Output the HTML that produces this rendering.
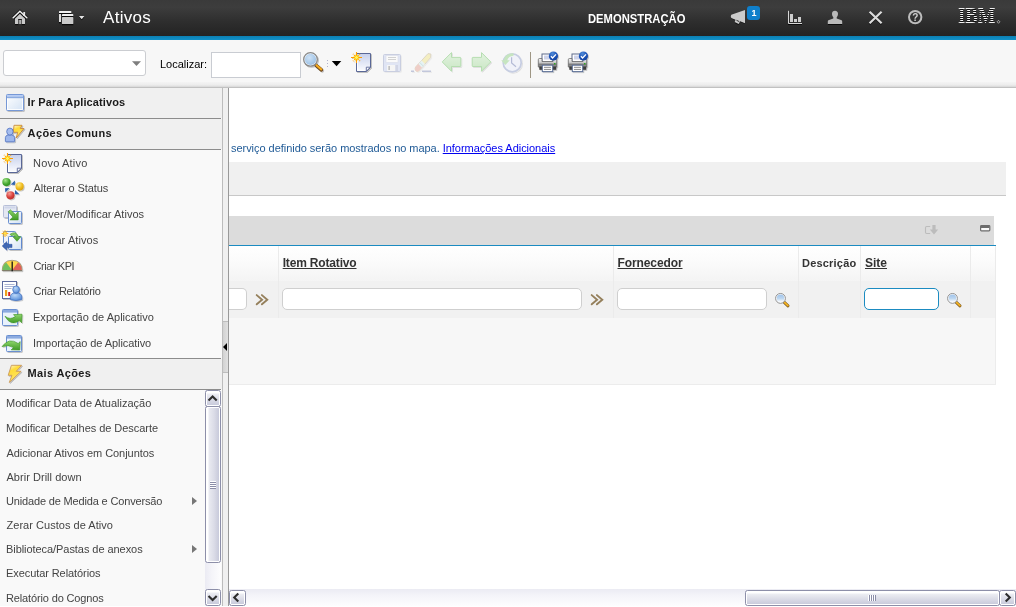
<!DOCTYPE html>
<html lang="pt-BR">
<head>
<meta charset="utf-8">
<title>Ativos</title>
<style>
*{box-sizing:border-box;margin:0;padding:0}
body{will-change:transform}
html,body{width:1016px;height:607px;overflow:hidden;background:#fff;font-family:"Liberation Sans",Arial,sans-serif;font-size:11px;color:#444}
.abs,.abs-c>*{position:absolute}
svg{position:absolute;overflow:visible}
#hdr{left:0;top:0;width:1016px;height:36px;background:linear-gradient(#3a3a3a 0,#3d3d3d 20%,#2e2e2e 60%,#232323 100%)}
#hdrline{left:0;top:36px;width:1016px;height:4px;background:linear-gradient(#0c7fb3,#1191c9)}
#tb{left:0;top:40px;width:1016px;height:48px;background:#f7f7f7}
#tbline{left:0;top:82px;width:1016px;height:6px;background:linear-gradient(#f4f4f4,#ececec 50%,#dcdcdc 75%,#b4b4b4)}
#title{left:103px;top:8px;font-size:17px;color:#fff;line-height:20px;letter-spacing:.3px;white-space:nowrap}
#demo{left:588px;top:12px;transform-origin:0 0;transform:scaleX(.937);font-size:12px;font-weight:bold;color:#fff;line-height:14px;white-space:nowrap}
#badge{left:747px;top:6px;width:13px;height:14px;background:#0f7fcb;border-radius:3px;color:#fff;font-size:9px;font-weight:bold;line-height:14px;text-align:center;padding-left:1px}
#combo{left:3px;top:50px;width:143px;height:26px;background:#fff;border:1px solid #cbcdd1;border-radius:3px}
#loc{left:160px;top:57px;font-size:11px;color:#000;line-height:14px;white-space:nowrap}
#find{left:211px;top:52px;width:90px;height:26px;background:#fff;border:1px solid #c9ccd2}
#tbsep{left:530px;top:52px;width:1px;height:26px;background:#9e9684}
#nav{left:0;top:88px;width:222px;height:519px;background:#f9f9f9}
.nh{left:0;width:222px;height:30px;background:#f0f0f0;font-weight:bold;color:#1a1a1a;font-size:11px;line-height:14px;padding:7px 0 0 27.6px;white-space:nowrap}
.nl{left:0;width:221px;height:1px;background:#8c8c8c}
.ni{left:33px;line-height:14px;height:14px;color:#444;white-space:nowrap}
.mi{left:6px;line-height:14px;height:14px;color:#444;white-space:nowrap}
.sub{width:0;height:0;border-left:5px solid #777;border-top:4px solid transparent;border-bottom:4px solid transparent;left:192px}
#split{left:222px;top:88px;width:7px;height:519px;background:#f0f0f0;border-left:1px solid #bcbcbc;border-right:1px solid #999}
#grip{left:223px;top:321px;width:5px;height:52px;background:linear-gradient(90deg,#d2d2d2,#e1e1e1);border-top:1px solid #bdbdbd;border-bottom:1px solid #bdbdbd}
#griparrow{left:223px;top:343px;width:0;height:0;border-right:4px solid #000;border-top:4px solid transparent;border-bottom:4px solid transparent}
#main{left:229px;top:88px;width:787px;height:519px;background:#fff}
#msg{left:231px;top:141px;font-size:11px;line-height:14px;color:#1f5a96;white-space:nowrap;letter-spacing:-.04px}
#msg a{color:#0000f0;text-decoration:underline;letter-spacing:-.03px}
#band{left:229px;top:162px;width:777px;height:34px;background:#f0f0f0;border-bottom:1px solid #c8c8c8}
#ttb{left:229px;top:216px;width:765px;height:29px;background:#dcdcdc}
#tline{left:229px;top:245px;width:767px;height:1px;background:#1b8bc1}
#thead{left:229px;top:246px;width:767px;height:35px;background:linear-gradient(#fff,#fbfbfb 45%,#f4f4f4)}
#tfilt{left:229px;top:281px;width:767px;height:37px;background:#f1f1f1}
#tempty{left:229px;top:318px;width:767px;height:67px;background:#f7f7f7;border-bottom:1px solid #ececec;border-right:1px solid #ececec}
.cs{top:246px;width:1px;height:72px;background:#ebebeb}
.th{top:256px;font-size:12px;font-weight:bold;color:#333;line-height:14px;white-space:nowrap;text-decoration:underline}
.fi{top:288px;height:22px;background:#fff;border:1px solid #cfcfcf;border-radius:5px}
.sb{background:linear-gradient(#fff,#e9eaf2 40%,#c6c8da);border:1px solid #9496b0;border-radius:3px;box-shadow:inset 0 0 0 1px #fff}

.sbv{background:linear-gradient(90deg,#fff 0,#fff 2px,#e9eaf1 3px,#dcdde8 55%,#c4c6d8 100%)}
.sbh{background:linear-gradient(#fff 0,#fff 2px,#ecedf3 3px,#dedfe9 50%,#c6c8da 100%)}
.sbb{border:1px solid #8d8fa9;border-radius:2.5px;box-shadow:inset 0 0 0 1px #fff}
#vtrack{left:205px;top:390px;width:16px;height:216px;background:linear-gradient(90deg,#ebebf3,#f4f4f9 40%,#fdfdfe)}
#htrack{left:229px;top:589px;width:787px;height:17px;background:linear-gradient(#ebebf3,#f4f4f9 40%,#fdfdfe)}

#ibm{left:958px;top:3px;width:60px;height:24px;font-family:"Liberation Serif","DejaVu Serif",serif;font-weight:bold;font-size:24px;line-height:24px;color:transparent;white-space:nowrap;transform-origin:0 0;transform:scale(.78,1);background:repeating-linear-gradient(#0a0a0a 0,#0a0a0a 1px,#f2f2f2 1px,#f2f2f2 2px);-webkit-background-clip:text;background-clip:text}
</style>
</head>
<body>
<div class="abs" id="hdr"></div>
<div class="abs" id="hdrline"></div>
<div class="abs" id="title">Ativos</div>
<div class="abs" id="demo">DEMONSTRAÇÃO</div>

<svg id="hicons" width="1016" height="36" viewBox="0 0 1016 36" style="left:0;top:0">
<!-- home -->
<g>
<path d="M15 24.6h3.3M21.7 24.6H25M13.4 18.7l1.2 0M25.6 18.7h1.2" stroke="#0a0a0a" stroke-width="1" fill="none"/>
<path d="M15 24V17.6L19.9 12.9 25 17.6V24h-3.3v-5h-3.4v5z" fill="#c9c9c9"/>
<rect x="19.3" y="20" width="1.5" height="4" fill="#d2d2d2"/>
<path d="M18.3 19h3.4v1h-3.4z" fill="#1c1c1c"/>
<path d="M13.3 18 19.9 11.5 26.7 18" stroke="#111" stroke-width="3.2" fill="none"/>
<path d="M23.3 12h1.8v4h-1.8z" fill="#e4e4e4"/>
<path d="M13.2 17.7 19.9 11.2 26.8 17.7" stroke="#f2f2f2" stroke-width="1.5" fill="none" stroke-linecap="round"/>
</g>
<!-- apps -->
<g>
<path d="M59 13.6h12.3M59 22.6h2M62 24.6h11.3M62 16.6h11.3" stroke="#0a0a0a" stroke-width="1.2" fill="none"/>
<path d="M59 13v-1.4q0-.7.7-.7h10.9q.7 0 .7.7V13z" fill="#efefef"/>
<rect x="59" y="14" width="2" height="8" fill="#dedede"/>
<path d="M62 16v-1.3q0-.7.7-.7h9.9q.7 0 .7.7V16z" fill="#efefef"/>
<rect x="62" y="17.1" width="11.3" height="6.9" rx=".6" fill="#cacaca"/>
<path d="M79 17h5.4l-2.7 3.2z" fill="#0a0a0a"/>
<path d="M79 16h5.4l-2.7 3.3z" fill="#e4e4e4"/>
</g>
<!-- megaphone -->
<g>
<path d="M731 16.6 745 10.6v13.4l-4.6-2-1.8 3-3.6-1.8 1-2.6-4.4-1.8q-1-1.3 0-2.6z" fill="#0c0c0c" opacity=".8"/>
<path d="M731.3 14.8 745 10v13.3l-4.8-2-1.5 2.6-4-2 .8-2.2-4.2-1.7q-1.1-1.6 0-3.2z" fill="#cbcbcb"/>
<path d="M736.5 20.3l2.8 1.3" stroke="#333" stroke-width="1" fill="none"/>
</g>
<!-- chart -->
<g>
<path d="M788 24.5h14" stroke="#0a0a0a" stroke-width="1"/>
<path d="M788.5 10.8V23.5H802" stroke="#d6d6d6" stroke-width="1" fill="none"/>
<rect x="790" y="14" width="3" height="8" fill="#cdcdcd"/>
<rect x="794" y="19" width="3" height="3" fill="#cdcdcd"/>
<rect x="798" y="17" width="3" height="5" fill="#cdcdcd"/>
</g>
<!-- user -->
<g>
<path d="M828 24.5h14" stroke="#0a0a0a" stroke-width="1"/>
<path d="M835 10.7c1.9 0 3 1.3 3 3.1 0 1.5-.5 2.8-1.3 3.5v1.2l4.3 1.5c.8.3 1.2.8 1.2 1.7V24H827.8v-2.3c0-.9.4-1.4 1.2-1.7l4.3-1.5v-1.2c-.8-.7-1.3-2-1.3-3.5 0-1.8 1.1-3.1 3-3.1z" fill="#b9b9b9"/>
</g>
<!-- close -->
<g>
<path d="M869.6 12.6 881.6 24.4M881.6 12.6 869.6 24.4" stroke="#0a0a0a" stroke-width="2" fill="none" opacity=".7"/>
<path d="M869.6 11.7 881.6 23.3M881.6 11.7 869.6 23.3" stroke="#dcdcdc" stroke-width="2.2" fill="none"/>
</g>
<path d="M998.5 20.3l1.4 1.5-1.4 1.5-1.4-1.5z" fill="none" stroke="#cfcfcf" stroke-width=".7"/>
<!-- help -->
<g>
<circle cx="915.2" cy="17.1" r="6.2" stroke="#bdbdbd" stroke-width="2" fill="none"/>
<text x="915.2" y="20.5" text-anchor="middle" font-family="Liberation Sans,Arial,sans-serif" font-weight="bold" font-size="10" fill="#d0d0d0">?</text>
</g>
</svg>
<div class="abs" id="badge">1</div>
<div class="abs" id="ibm">IBM</div>
<div class="abs" id="tb"></div>
<div class="abs" id="tbline"></div>
<div class="abs" id="combo"></div>
<div class="abs" id="loc">Localizar:</div>
<div class="abs" id="find"></div>
<div class="abs" id="tbsep"></div>
<svg id="ticons" width="1016" height="48" viewBox="0 40 1016 48" style="left:0;top:40px">
<defs>
<linearGradient id="gDoc" x1="0" y1="0" x2="0" y2="1"><stop offset="0" stop-color="#c6d0ec"/><stop offset="1" stop-color="#fdfdff"/></linearGradient>
<radialGradient id="gGlass" cx=".4" cy=".35" r=".7"><stop offset="0" stop-color="#cfe2f5"/><stop offset=".7" stop-color="#a9caea"/><stop offset="1" stop-color="#9cc0e6"/></radialGradient>
<linearGradient id="gPr" x1="0" y1="0" x2="0" y2="1"><stop offset="0" stop-color="#f4f4f4"/><stop offset=".45" stop-color="#d0d0d0"/><stop offset=".7" stop-color="#7e7e7e"/><stop offset="1" stop-color="#9a9a9a"/></linearGradient>
<radialGradient id="gChk" cx=".4" cy=".25" r=".8"><stop offset="0" stop-color="#4f8bd8"/><stop offset=".6" stop-color="#1a4fb4"/><stop offset="1" stop-color="#123f9c"/></radialGradient>
<linearGradient id="gArr" x1="0" y1="0" x2="0" y2="1"><stop offset="0" stop-color="#e2f2df"/><stop offset="1" stop-color="#cae7c5"/></linearGradient>
<filter id="fsh2" x="-30%" y="-30%" width="170%" height="170%"><feGaussianBlur in="SourceAlpha" stdDeviation=".7"/><feOffset dx=".6" dy=".6"/><feComponentTransfer><feFuncA type="linear" slope=".1"/></feComponentTransfer><feMerge><feMergeNode/><feMergeNode in="SourceGraphic"/></feMerge></filter>
<filter id="fsh" x="-30%" y="-30%" width="170%" height="170%"><feGaussianBlur in="SourceAlpha" stdDeviation=".7"/><feOffset dx=".8" dy=".8"/><feComponentTransfer><feFuncA type="linear" slope=".22"/></feComponentTransfer><feMerge><feMergeNode/><feMergeNode in="SourceGraphic"/></feMerge></filter>
<g id="iMag">
<path d="M5.6 5.9 10.9 10.4" stroke="#6b4720" stroke-width="3.5" stroke-linecap="round" fill="none"/>
<path d="M5.9 5.8 10.8 10" stroke="#f5aa1e" stroke-width="2.1" stroke-linecap="round" fill="none"/>
<circle cx="0" cy="0" r="6.8" fill="#f4f7fb" stroke="#888" stroke-width="1.3"/>
<circle cx="0" cy="0" r="5.6" fill="url(#gGlass)"/>
</g>
<g id="iNew">
<path d="M.5 .5H14.5V14.5L10.5 18.5H.5z" fill="url(#gDoc)" stroke="#5a6797" stroke-width="1"/>
<path d="M1.5 5V17.5H10" fill="none" stroke="#fff" stroke-width="1" opacity=".9"/>
<path d="M14.3 14.2H10.3V18.3z" fill="#fff" stroke="#5a6797" stroke-width=".9"/>
<g transform="translate(.5 4.5)">
<circle r="3.1" fill="#ffe84a" opacity=".9"/>
<path d="M-5.5 0H5.5M0 -5.5V5.5" stroke="#ff9c00" stroke-width="1.1"/>
<path d="M-3.6 -3.6 3.6 3.6M-3.6 3.6 3.6 -3.6" stroke="#ffa408" stroke-width="1.1" stroke-dasharray="1.3 1.1" stroke-dashoffset=".5"/>
<circle r="1.9" fill="#ffd21e"/>
<path d="M-1.5 0H1.5M0 -1.5V1.5" stroke="#fff45a" stroke-width="1"/>
</g>
</g>
<g id="iPrn">
<rect x="4" y="2" width="11" height="8" fill="#fff" stroke="#5d6b8c" stroke-width="1"/>
<rect x="6" y="3.5" width="7.5" height="4" fill="#cdd3ea"/>
<path d="M1.5 6.5h2.5v3h11v-3h2.5q1.2 0 1.2 1.2v7.3h-18.4v-7.3q0-1.2 1.2-1.2z" fill="url(#gPr)" stroke="#6a6a6a" stroke-width=".8"/>
<rect x="1.3" y="14.5" width="16.9" height="3.3" fill="#3c3c3c"/>
<rect x="4.3" y="13.2" width="10.4" height="6.4" fill="#fff" stroke="#5c7098" stroke-width="1"/>
<path d="M6 15.3h7M6 17.4h7" stroke="#8a8a8a" stroke-width="1"/>
<rect x="16" y="11" width="1.5" height="1.5" fill="#2ea520"/>
<circle cx="15.4" cy="4" r="4.6" fill="url(#gChk)"/>
<path d="M12.9 4.3l1.7 1.7 3.4-3.6" stroke="#fff" stroke-width="1.3" fill="none"/>
</g>
</defs>
<use href="#iMag" x="310.5" y="59.4" filter="url(#fsh)"/>
<path d="M327 60h1v1h-1zM327 63h1v1h-1zM327 66h1v1h-1z" fill="#b2b2cc"/>
<path d="M331.8 61h9.5l-4.75 5.2z" fill="#000"/>
<use href="#iNew" x="356" y="53" filter="url(#fsh)"/>
<!-- save disabled -->
<g opacity=".48" filter="url(#fsh2)">
<rect x="383.5" y="54.5" width="17" height="17" rx="1" fill="#c9d3f2" stroke="#98a3c8" stroke-width="1"/>
<rect x="386" y="55.5" width="12" height="7" fill="#fff" stroke="#b6bdd8" stroke-width=".6"/>
<path d="M388 57.5h8M388 59.5h8" stroke="#aaa" stroke-width="1"/>
<rect x="387" y="65" width="8" height="6" fill="#f4f4f4"/>
<rect x="388.3" y="66" width="1.7" height="4" fill="#8a8a8a"/>
<rect x="395.5" y="65" width="2.5" height="6" fill="#a9b2d2"/>
</g>
<!-- eraser disabled -->
<g opacity=".5" filter="url(#fsh2)">
<path d="M411 71.2h3M422 71.2h9" stroke="#8f98c0" stroke-width="1.6"/>
<path d="M415.6 67 428 53.6 430.9 54 430.6 57.6 419 70.8Q416.8 72.2 415.5 70.4 414.6 68.6 415.6 67z" fill="#f3e68c" stroke="#b9a98c" stroke-width=".8"/>
<path d="M415.6 67 419.6 62.6 423 66.2 419 70.8Q416.8 72.2 415.5 70.4 414.6 68.6 415.6 67z" fill="#e8a79a"/>
<path d="M418.4 63.9 421.6 60.4 425 63.9 421.8 67.5z" fill="#d8eef0"/>
<path d="M419.7 62.4 423.6 66.4" stroke="#9cc" stroke-width=".9"/>
</g>
<!-- arrows -->
<g filter="url(#fsh2)">
<path d="M442.2 61.9 451.5 52.6V57.4H460.2Q460.8 57.4 460.8 58V65.9Q460.8 66.5 460.2 66.5H451.5V71.3z" fill="url(#gArr)" stroke="#b1dbab" stroke-width=".9"/>
<path d="M490.8 61.9 481.5 52.6V57.4H472.8Q472.2 57.4 472.2 58V65.9Q472.2 66.5 472.8 66.5H481.5V71.3z" fill="url(#gArr)" stroke="#b1dbab" stroke-width=".9"/>
</g>
<!-- clock -->
<g filter="url(#fsh2)">
<circle cx="512.2" cy="62.8" r="9" fill="#f0f2f9" stroke="#c6cde2" stroke-width="1.7"/>
<path d="M511.6 57.2V63L516 66.8" stroke="#b4bbd6" stroke-width="1.2" fill="none"/>
<path d="M513.5 53.2Q505 53.2 503.6 60.2H501.2L505.4 65 509.8 60.2H507.3Q508.3 56.3 513.5 55.8z" fill="#c6e5c0"/>
</g>
<use href="#iPrn" x="538" y="52" filter="url(#fsh)"/>
<use href="#iPrn" x="568" y="52" filter="url(#fsh)"/>
<!-- combo arrow -->
<path d="M132 61.2h9l-4.5 4.7z" fill="#7e7e7e"/>
</svg>


<div class="abs" id="main"></div>
<div class="abs" id="msg">serviço definido serão mostrados no mapa. <a>Informações Adicionais</a></div>
<div class="abs" id="band"></div>
<div class="abs" id="ttb"></div>
<div class="abs" id="thead"></div>
<div class="abs" id="tfilt"></div>
<div class="abs" id="tempty"></div>
<div class="abs" id="tline"></div>
<div class="abs cs" style="left:278px"></div>
<div class="abs cs" style="left:613px"></div>
<div class="abs cs" style="left:798px"></div>
<div class="abs cs" style="left:860px"></div>
<div class="abs cs" style="left:970px"></div>
<div class="abs cs" style="left:995px"></div>
<div class="abs th" style="left:282.7px;letter-spacing:-.17px">Item Rotativo</div>
<div class="abs th" style="left:617.5px;letter-spacing:-.1px">Fornecedor</div>
<div class="abs th" style="left:802px;font-size:11px;text-decoration:none;letter-spacing:.2px">Descrição</div>
<div class="abs th" style="left:865px">Site</div>
<div class="abs fi" style="left:229px;width:18px;border-left:0;border-radius:0 5px 5px 0"></div>
<div class="abs fi" style="left:282px;width:300px"></div>
<div class="abs fi" style="left:617px;width:150px"></div>
<div class="abs fi" style="left:864px;width:75px;border-color:#1b8bc1"></div>


<svg width="787" height="519" viewBox="229 88 787 519" style="left:229px;top:88px">
<defs>
<linearGradient id="gGl2" x1="0" y1="0" x2="0" y2="1"><stop offset="0" stop-color="#9fc3ea"/><stop offset=".5" stop-color="#bcd6f0"/><stop offset="1" stop-color="#ffffff"/></linearGradient>
<g id="iMagS">
<path d="M3.8 3.9 7.5 7.4" stroke="#7a5520" stroke-width="3" stroke-linecap="round" fill="none"/>
<path d="M4 4 7.4 7.2" stroke="#f6b622" stroke-width="1.8" stroke-linecap="round" fill="none"/>
<circle cx="0" cy="0" r="4.9" fill="#fff" stroke="#8e8e8e" stroke-width="1"/>
<circle cx="0" cy="0" r="3.8" fill="url(#gGl2)"/>
</g>
<g id="iChev" fill="none" stroke="#95805c" stroke-width="1.9" stroke-linecap="round" stroke-linejoin="miter">
<path d="M.4 .6 5.8 5.2 .4 9.8"/>
<path d="M5.6 .6 11 5.2 5.6 9.8"/>
</g>
</defs>
<use href="#iChev" x="256.3" y="294.5"/>
<use href="#iChev" x="591.3" y="294.5"/>
<use href="#iMagS" x="780.5" y="298.4"/>
<use href="#iMagS" x="952.5" y="298.4"/>
<!-- download (disabled) -->
<g>
<path d="M930.2 226.5H926.7Q925.5 226.5 925.5 227.7V232.3Q925.5 233.5 926.7 233.5H930.2" fill="none" stroke="#bcbcbc" stroke-width="1.1"/>
<path d="M932.4 225H935.6V229.4H938.2L934 234.6 929.8 229.4H932.4z" fill="#bcbcbc"/>
</g>
<!-- minimize -->
<g>
<rect x="980.6" y="225.6" width="9.2" height="5.3" rx=".8" fill="#fafafa" stroke="#6b6b6b" stroke-width="1.2"/>
<rect x="981" y="226" width="8.4" height="2" fill="#6b6b6b"/>
</g>
</svg>
<div class="abs" id="nav"></div>
<div class="abs nh" style="top:88px;letter-spacing:0.11px">Ir Para Aplicativos</div>
<div class="abs nl" style="top:118px"></div>
<div class="abs nh" style="top:119px;letter-spacing:0.36px">Ações Comuns</div>
<div class="abs nl" style="top:149px"></div>
<div class="abs ni" style="top:156px;letter-spacing:0.19px">Novo Ativo</div>
<div class="abs ni" style="top:181px;margin-left:.5px;letter-spacing:-0.07px">Alterar o Status</div>
<div class="abs ni" style="top:207px;letter-spacing:0.02px">Mover/Modificar Ativos</div>
<div class="abs ni" style="top:233px;margin-left:.5px;letter-spacing:0.08px">Trocar Ativos</div>
<div class="abs ni" style="top:259px;margin-left:.5px;letter-spacing:-0.44px">Criar KPI</div>
<div class="abs ni" style="top:284px;margin-left:.5px;letter-spacing:-0.25px">Criar Relatório</div>
<div class="abs ni" style="top:310px;letter-spacing:0.02px">Exportação de Aplicativo</div>
<div class="abs ni" style="top:336px;letter-spacing:-0.07px">Importação de Aplicativo</div>
<div class="abs nl" style="top:358px"></div>
<div class="abs nh" style="top:359px;letter-spacing:0.36px">Mais Ações</div>
<div class="abs nl" style="top:389px"></div>
<div class="abs mi" style="top:396px;letter-spacing:-0.01px">Modificar Data de Atualização</div>
<div class="abs mi" style="top:421px;letter-spacing:-0.05px">Modificar Detalhes de Descarte</div>
<div class="abs mi" style="top:446px;margin-left:.5px;letter-spacing:-0.05px">Adicionar Ativos em Conjuntos</div>
<div class="abs mi" style="top:470px;margin-left:.5px;letter-spacing:0.03px">Abrir Drill down</div>
<div class="abs mi" style="top:494px;letter-spacing:-0.16px">Unidade de Medida e Conversão</div>
<div class="abs mi" style="top:518px;margin-left:.5px;letter-spacing:0.03px">Zerar Custos de Ativo</div>
<div class="abs mi" style="top:542px;letter-spacing:-0.06px">Biblioteca/Pastas de anexos</div>
<div class="abs mi" style="top:566px;letter-spacing:-0.08px">Executar Relatórios</div>
<div class="abs mi" style="top:591px;letter-spacing:-0.14px">Relatório do Cognos</div>
<div class="abs sub" style="top:497px"></div>
<div class="abs sub" style="top:545px"></div>

<svg id="nicons" width="32" height="519" viewBox="0 88 32 519" style="left:0;top:88px">
<defs>
<linearGradient id="gWin" x1="0" y1="0" x2="1" y2="1"><stop offset="0" stop-color="#ffffff"/><stop offset="1" stop-color="#d3e2f4"/></linearGradient>
<linearGradient id="gBolt" x1="0" y1="0" x2=".4" y2="1"><stop offset="0" stop-color="#fffbe0"/><stop offset=".35" stop-color="#ffdb38"/><stop offset="1" stop-color="#ffe768"/></linearGradient>
<linearGradient id="gGrn" x1="0" y1="0" x2="0" y2="1"><stop offset="0" stop-color="#8fd66e"/><stop offset="1" stop-color="#3f9a24"/></linearGradient>
<radialGradient id="gBg" cx=".38" cy=".3" r=".75"><stop offset="0" stop-color="#a5e58a"/><stop offset=".6" stop-color="#46a832"/><stop offset="1" stop-color="#2e8a20"/></radialGradient>
<radialGradient id="gBy" cx=".38" cy=".3" r=".75"><stop offset="0" stop-color="#ffee90"/><stop offset=".6" stop-color="#f0bc1c"/><stop offset="1" stop-color="#d29a10"/></radialGradient>
<radialGradient id="gBr" cx=".38" cy=".3" r=".75"><stop offset="0" stop-color="#f59a94"/><stop offset=".6" stop-color="#d8403c"/><stop offset="1" stop-color="#b82c2a"/></radialGradient>
<radialGradient id="gUsr" cx=".4" cy=".3" r=".8"><stop offset="0" stop-color="#bcd8f8"/><stop offset=".7" stop-color="#6a9ce0"/><stop offset="1" stop-color="#4a7cc8"/></radialGradient>
<g id="iWin">
<rect x=".5" y=".5" width="17" height="16" rx=".8" fill="url(#gWin)" stroke="#7698d6" stroke-width="1"/>
<rect x="1" y="1" width="16" height="1.5" fill="#b6ccf6"/>
<rect x="1" y="2.5" width="16" height="1.7" fill="#8cabe0"/>
<path d="M1.5 4.5V15.5H16.5V4.5" fill="none" stroke="#fff" stroke-width="1" opacity=".85"/>
</g>
<g id="iBolt">
<path d="M3.4 .3H13.6L8.2 6.3H13.1L1.3 17.5 3.9 10.3H.2z" fill="url(#gBolt)" stroke="#c9985a" stroke-width=".9" stroke-linejoin="round"/>
</g>
</defs>
<use href="#iWin" x="6" y="94" filter="url(#fsh)"/>
<!-- acoes comuns -->
<g filter="url(#fsh)">
<path d="M14 125.3H22L20.3 128.5H24L16.2 138 17.7 132.3H13.3z" fill="url(#gBolt)" stroke="#c98a3c" stroke-width=".9" stroke-linejoin="round"/>
<path d="M5.4 141.3V137.5Q5.4 135.5 8 135H11.8Q14.6 135.5 14.6 137.5V141.3Q14.6 141.8 14 141.8H6Q5.4 141.8 5.4 141.3z" fill="#9db7ec" stroke="#5b7cc6" stroke-width=".9"/>
<ellipse cx="9.9" cy="131.6" rx="3.2" ry="3.5" fill="#a4bcee" stroke="#5b7cc6" stroke-width=".9"/>
</g>
<use href="#iNew" x="7" y="154" filter="url(#fsh)"/>
<!-- status -->
<g filter="url(#fsh)">
<path d="M10.8 184.6 14.9 180.4 14.9 184.9zM5 188.2 9.6 188 5.3 192.6zM15 190 19.4 194.2 14.8 194.3z" fill="#2f62ad"/>
<circle cx="6.4" cy="182.1" r="4.1" fill="url(#gBg)"/>
<circle cx="19.6" cy="186.4" r="4.1" fill="url(#gBy)"/>
<circle cx="10.4" cy="195.3" r="4.1" fill="url(#gBr)"/>
</g>
<!-- mover -->
<g filter="url(#fsh)">
<rect x="3.5" y="205.5" width="13" height="12" rx=".8" fill="#e4e8f3" stroke="#b7bfd8" stroke-width="1"/>
<rect x="4.5" y="206.5" width="11" height="2" fill="#cfd6ea"/>
<rect x="8.5" y="211.5" width="13" height="12" rx=".8" fill="url(#gWin)" stroke="#6a8fd0" stroke-width="1"/>
<path d="M8.2 211.8 10.3 209.8 15.4 214.5 18.2 211.9V219.9H9.9L12.9 217z" fill="url(#gGrn)" stroke="#3d8f23" stroke-width=".6"/>
</g>
<!-- trocar -->
<g filter="url(#fsh)">
<rect x="3.5" y="231.5" width="12" height="12" rx=".8" fill="#eef2fa" stroke="#6a8fd0" stroke-width="1"/>
<rect x="8.5" y="236.5" width="13" height="13" rx=".8" fill="url(#gWin)" stroke="#5f88cf" stroke-width="1"/>
<path d="M10 234.3Q16 230.3 18.5 236.8H20.8L17 241.3 13 236.8H15.4Q14 234 11.3 235.7z" fill="url(#gGrn)" stroke="#3d8f23" stroke-width=".6"/>
<path d="M2.2 246 6.8 241.6V244.3H12V247.6H6.8V250.2z" fill="#3f68b5" stroke="#2d4f98" stroke-width=".5"/>
<g transform="translate(5 233.6)">
<path d="M-3.3 0H3.3M0 -3.3V3.3M-2.3 -2.3 2.3 2.3M-2.3 2.3 2.3 -2.3" stroke="#ffa800" stroke-width="1"/>
<circle r="1.3" fill="#ffe14a"/>
</g>
</g>
<!-- kpi -->
<g filter="url(#fsh)">
<path d="M2.2 270.6Q2.2 260.3 12.1 260.3 22 260.3 22 270.6z" fill="#ffd84f" stroke="#8a8070" stroke-width=".7"/>
<path d="M2.5 270.3Q2.5 265 6.2 262.4L12.1 270.3z" fill="#6fbf5f"/>
<path d="M21.7 270.3Q21.7 265 18 262.4L12.1 270.3z" fill="#df615a"/>
<path d="M2.2 270.6H22" stroke="#7a7468" stroke-width=".9"/>
<path d="M12.2 261.5V271.3" stroke="#111" stroke-width="1.3"/>
</g>
<!-- relatorio -->
<g filter="url(#fsh)">
<rect x="2.5" y="281.5" width="14" height="17" fill="#fff" stroke="#5b6a9e" stroke-width="1"/>
<path d="M4.5 284.5h10M4.5 286.5h10M4.5 288.5h7" stroke="#aab4d4" stroke-width="1"/>
<rect x="5" y="290" width="2.2" height="6" fill="#eca21c"/>
<rect x="8.2" y="292" width="2" height="4" fill="#d62222"/>
<path d="M10.3 299.6Q9.6 294 13.5 293H18.7Q22.5 294 21.8 299.6Q16 301.6 10.3 299.6z" fill="url(#gUsr)" stroke="#3f6fbe" stroke-width=".7"/>
<ellipse cx="16.1" cy="289.6" rx="3.4" ry="3.7" fill="url(#gUsr)" stroke="#3f6fbe" stroke-width=".7"/>
</g>
<!-- export -->
<g filter="url(#fsh)">
<rect x="2.5" y="309.5" width="15" height="16" rx=".8" fill="#e9f2fc" stroke="#6a8fd0" stroke-width="1"/>
<rect x="3" y="310" width="14" height="2.6" fill="#8cabe0"/>
<path d="M5 316.3Q10 320.3 15.3 316.6L13.5 314.6 22 314.2 21.6 322.8 19.6 320.6Q11 327 5 316.3z" fill="url(#gGrn)" stroke="#3a9022" stroke-width=".6"/>
</g>
<!-- import -->
<g filter="url(#fsh)">
<rect x="6.5" y="335.5" width="15" height="16" rx=".8" fill="#e9f2fc" stroke="#6a8fd0" stroke-width="1"/>
<rect x="7" y="336" width="14" height="2.6" fill="#8cabe0"/>
<path d="M2 346.6Q9 337 18.2 343.5L20.2 341.6 19.8 350 11.2 349.8 13.6 347.6Q8.6 344.3 2 346.6z" fill="url(#gGrn)" stroke="#3a9022" stroke-width=".6"/>
</g>
<use href="#iBolt" x="8" y="365" filter="url(#fsh)"/>
</svg>
<div class="abs" id="split"></div>
<div class="abs" id="grip"></div>
<div class="abs" id="griparrow"></div>

<div class="abs" id="vtrack"></div>
<div class="abs sbb sbh" style="left:205px;top:390px;width:16px;height:17px"></div>
<div class="abs sbb sbv" style="left:205px;top:406px;width:16px;height:157px"></div>
<div class="abs sbb sbh" style="left:205px;top:589px;width:16px;height:17px"></div>
<div class="abs" id="htrack"></div>
<div class="abs sbb sbh" style="left:229px;top:590px;width:17px;height:16px"></div>
<div class="abs sbb sbh" style="left:745px;top:590px;width:255px;height:16px"></div>
<div class="abs sbb sbh" style="left:999px;top:590px;width:17px;height:16px"></div>
<svg width="1016" height="607" viewBox="0 0 1016 607" style="left:0;top:0;pointer-events:none">
<g fill="none" stroke="#2e2e2e" stroke-width="2.1" stroke-linejoin="miter">
<path d="M208.5 400.6 212.6 396.5 216.7 400.6"/>
<path d="M208.5 595.9 212.6 600 216.7 595.9"/>
<path d="M238.3 593.4 234.2 597.5 238.3 601.6"/>
<path d="M1005.7 593.4 1009.8 597.5 1005.7 601.6"/>
</g>
<path d="M210 481.5h6M210 483.5h6M210 485.5h6M210 487.5h6" stroke="#fff" stroke-width="1"/>
<path d="M210 482.5h6M210 484.5h6M210 486.5h6M210 488.5h6" stroke="#8b8da8" stroke-width="1"/>
<path d="M868.5 595v6M870.5 595v6M872.5 595v6M874.5 595v6" stroke="#fff" stroke-width="1"/>
<path d="M869.5 595v6M871.5 595v6M873.5 595v6M875.5 595v6" stroke="#8b8da8" stroke-width="1"/>
</svg>
<div class="abs" style="left:0;top:606px;width:1016px;height:1px;background:#fff"></div>
</body>
</html>
